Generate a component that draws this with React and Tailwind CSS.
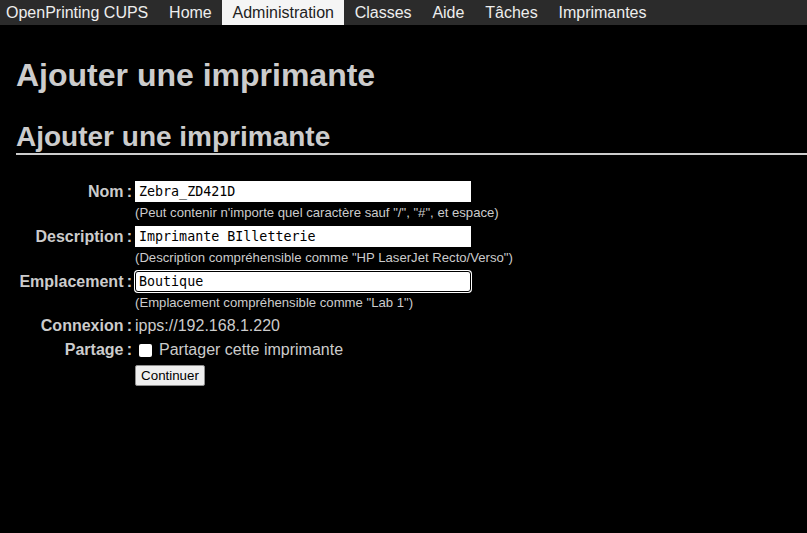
import { useState } from "react";

const navItems = [
  "OpenPrinting CUPS",
  "Home",
  "Administration",
  "Classes",
  "Aide",
  "Tâches",
  "Imprimantes",
];

// champ texte dessiné en div pour que le "_" ne soit pas rogné
function TextField({ value, focused }) {
  return (
    <div
      role="textbox"
      className={`w-[336px] h-[21px] flex items-center bg-white text-black text-[13.33px] leading-none whitespace-pre font-['DejaVu_Sans_Mono',monospace] ${
        focused
          ? "rounded-[3px] border border-black pl-[3px] ring-1 ring-white"
          : "pl-[4px]"
      }`}
    >
      {value}
    </div>
  );
}

function Field({ label, value, help, focused }) {
  return (
    <>
      <div className="h-[23px] flex items-center justify-end font-bold whitespace-nowrap">
        {label}
      </div>
      <div>
        <div className="h-[23px] flex items-center">
          <TextField value={value} focused={focused} />
        </div>
        <div className="h-[20px] flex items-center text-[13.15px]">{help}</div>
      </div>
    </>
  );
}

export default function App() {
  const [shared, setShared] = useState(false);

  return (
    <div className="min-h-[533px] bg-black text-[#cccccc] font-['Liberation_Sans',Arial,sans-serif] text-[16px]">
      {/* barre de navigation */}
      <nav className="h-[25px] bg-[#2b2b2b] flex">
        {navItems.map((item, i) => (
          <a
            key={item}
            className={`h-[25px] leading-[25px] pr-[10.4px] ${i === 0 ? "pl-[6px]" : "pl-[10.4px]"} ${
              item === "Administration"
                ? "bg-[#f5f5f5] text-[#222222]"
                : "text-[#eeeeee]"
            }`}
          >
            {item}
          </a>
        ))}
      </nav>

      <div className="pl-[16px] pt-[32px]">
        <h1 className="text-[32px] leading-[37px] font-bold">
          Ajouter une imprimante
        </h1>
        <h2 className="mt-[27px] text-[28px] leading-[32px] font-bold border-b-2 border-[#cccccc]">
          Ajouter une imprimante
        </h2>

        <div className="mt-[25px] grid grid-cols-[116px_auto] gap-x-[3px] gap-y-[2px] justify-start">
          <Field
            label={"Nom\u202F:"}
            value="Zebra_ZD421D"
            help={'(Peut contenir n\'importe quel caractère sauf "/", "#", et espace)'}
          />
          <Field
            label={"Description\u202F:"}
            value="Imprimante BIlletterie"
            help={'(Description compréhensible comme "HP LaserJet Recto/Verso")'}
          />
          <Field
            label={"Emplacement\u202F:"}
            value="Boutique"
            help={'(Emplacement compréhensible comme "Lab 1")'}
            focused
          />

          <div className="h-[22px] flex items-center justify-end font-bold">
            {"Connexion\u202F:"}
          </div>
          <div className="h-[22px] flex items-center">ipps://192.168.1.220</div>

          <div className="h-[22px] flex items-center justify-end font-bold">
            {"Partage\u202F:"}
          </div>
          <label className="h-[22px] flex items-center">
            <span
              onClick={() => setShared(!shared)}
              className="ml-[4px] w-[13px] h-[13px] bg-white rounded-[2px] flex items-center justify-center text-[11px] leading-none text-black"
            >
              {shared ? "✓" : ""}
            </span>
            <span className="ml-[7px]">Partager cette imprimante</span>
          </label>

          <div className="h-[25px]" />
          <div className="h-[25px] flex items-center">
            <button className="w-[70px] h-[21px] bg-[#efefef] border border-[#8f8f8f] rounded-[2px] text-black text-[13.33px] leading-[19px]">
              Continuer
            </button>
          </div>
        </div>
      </div>
    </div>
  );
}
